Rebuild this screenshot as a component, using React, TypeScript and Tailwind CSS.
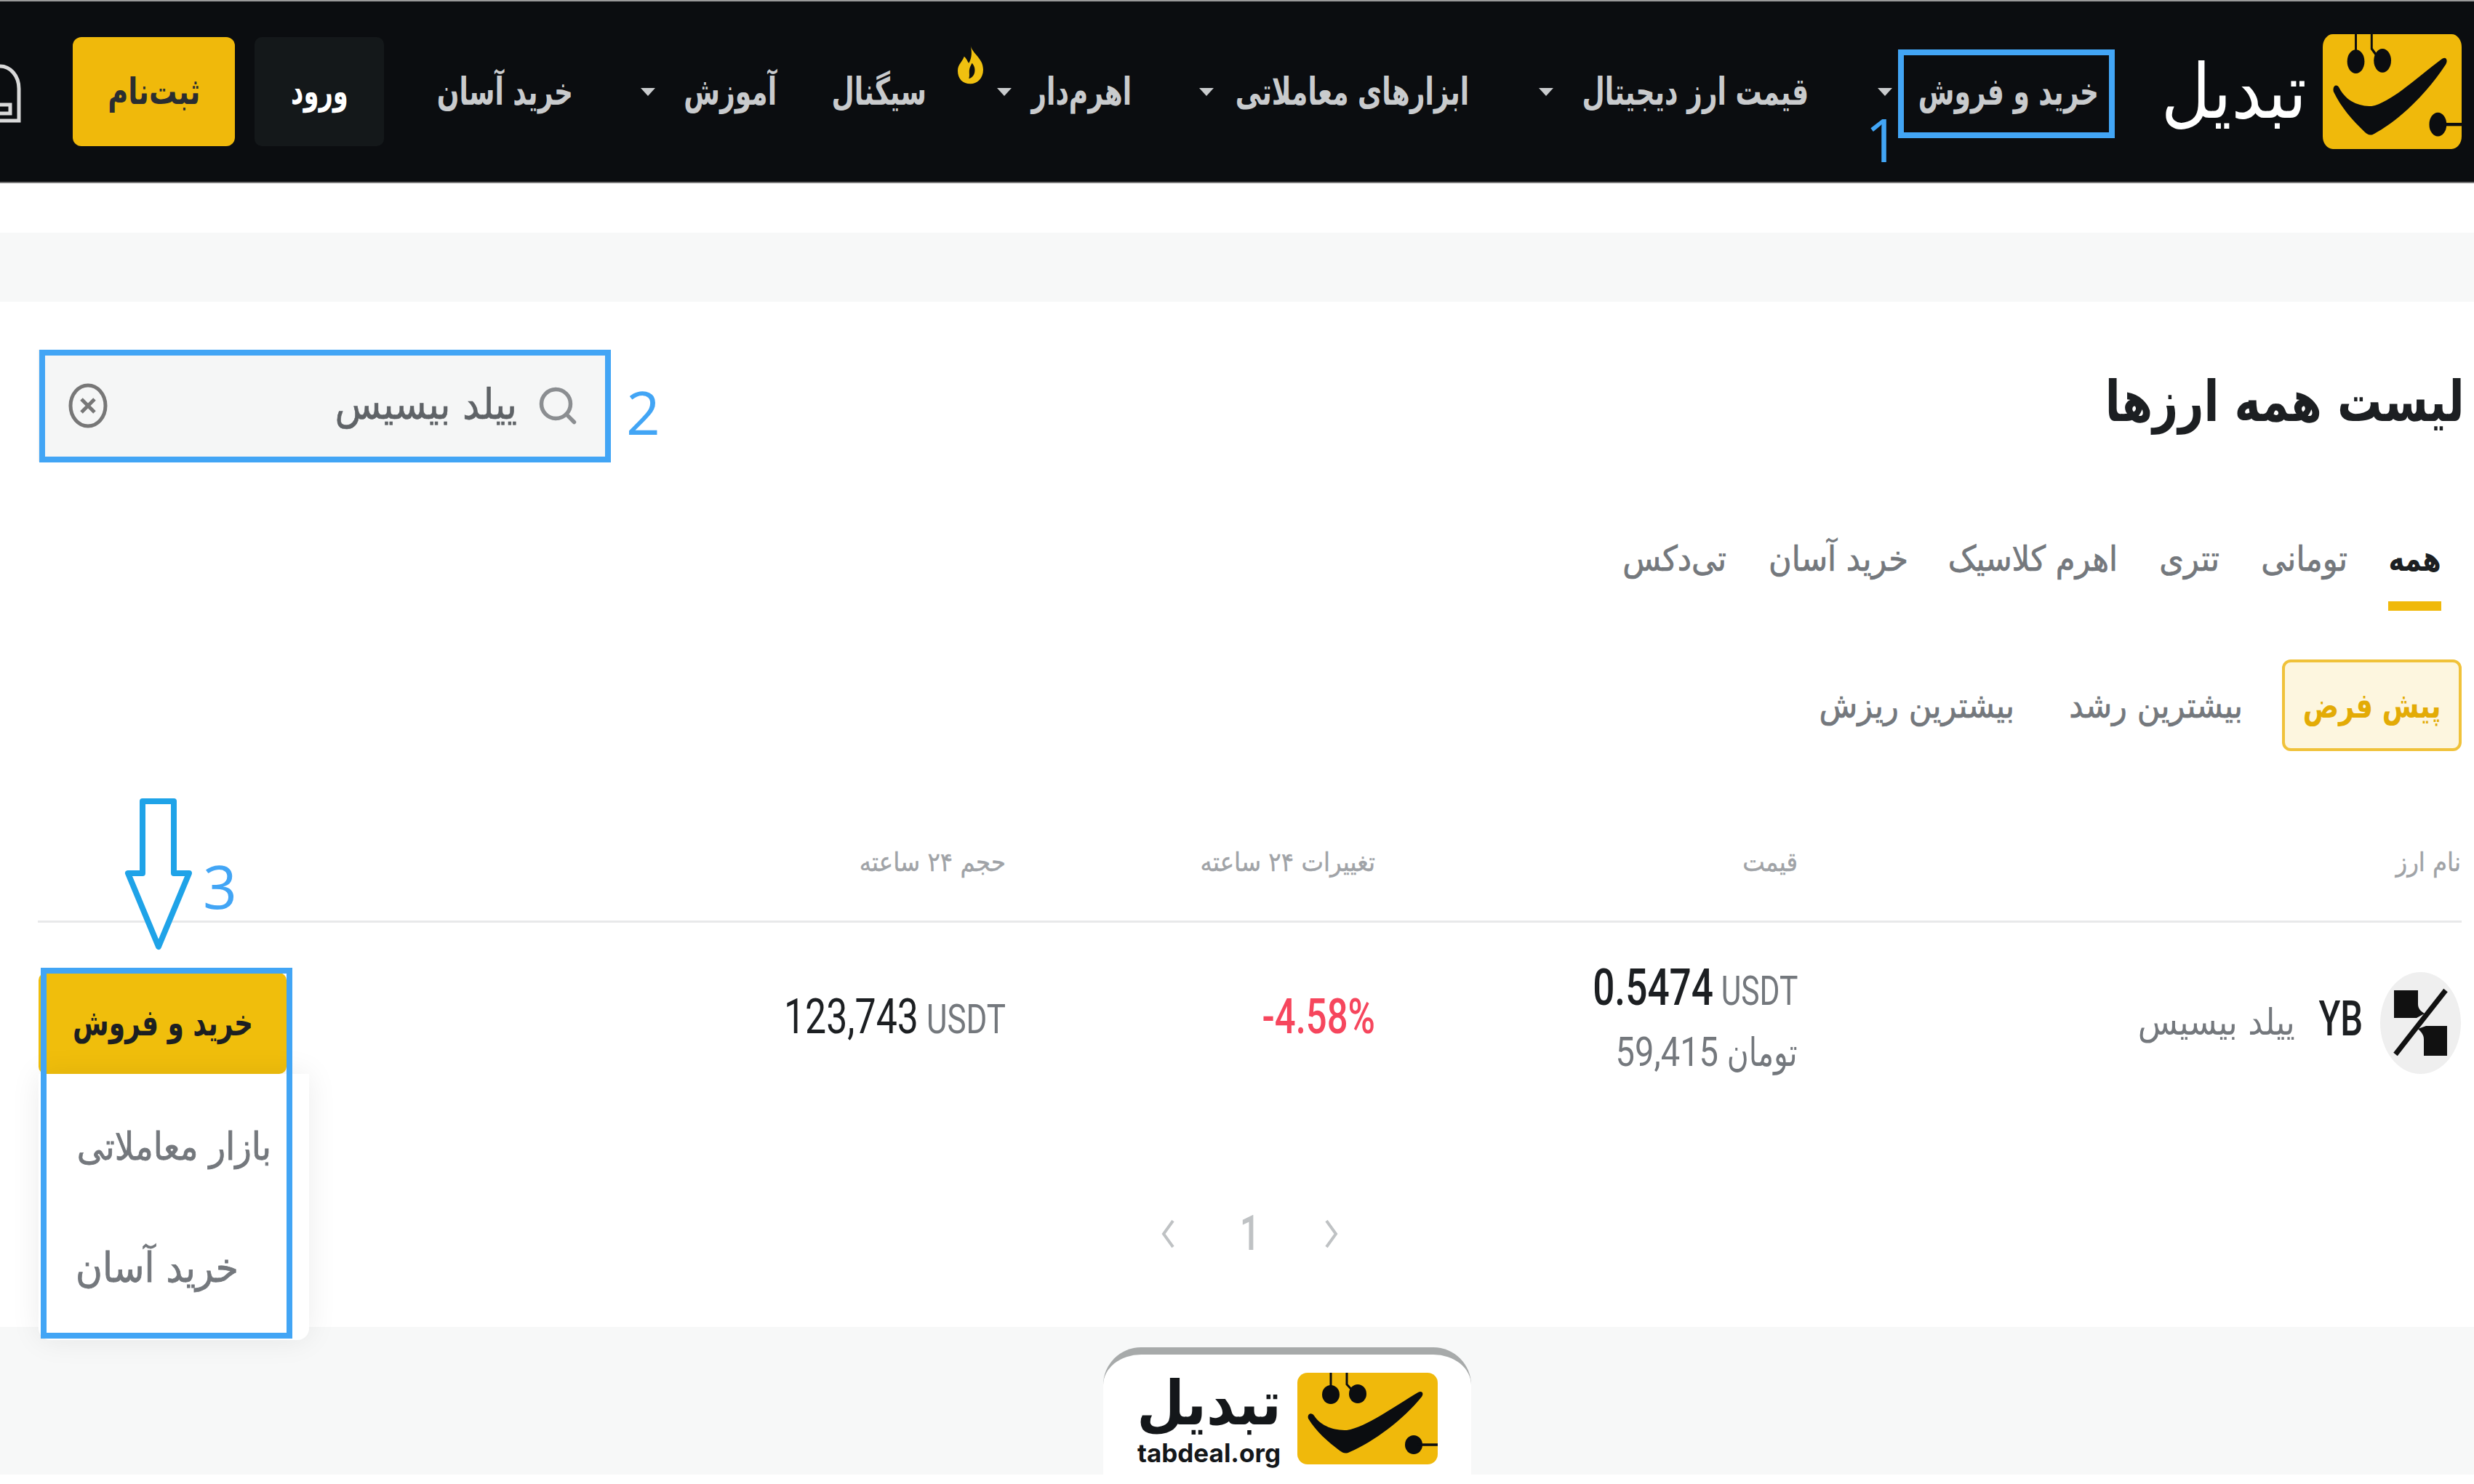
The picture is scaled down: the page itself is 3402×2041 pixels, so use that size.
import { Search } from 'lucide-react';

const BLUE = 'border-[#42a5f5]';
const NUMBER = "font-['Roboto',sans-serif]";
const NOTE = "font-['Open_Sans',sans-serif] text-[82px] leading-[112px] text-[#42a5f5]";

function Logo({ className }: { className?: string }) {
  return (
    <svg viewBox="0 0 193 126" preserveAspectRatio="none" className={className}>
      <rect width="193" height="126" rx="14" fill="#f0b90b" />
      <path d="M46 0V20M68 0V16L80 29" stroke="#0b0d10" strokeWidth="3" fill="none" />
      <ellipse cx="46" cy="30" rx="12" ry="13" fill="#0b0d10" />
      <ellipse cx="83" cy="29" rx="12" ry="13" fill="#0b0d10" />
      <path
        d="M15 63C13 56 20 54 23 59C33 74 50 79 68 79C95 75 135 45 166 27C172 24 174 29 171 33C145 65 105 95 72 109C66 112 62 110 58 107C42 95 25 80 15 63Z"
        fill="#0b0d10"
      />
      <ellipse cx="160" cy="99" rx="12" ry="13" fill="#0b0d10" />
      <path d="M165 99H193" stroke="#0b0d10" strokeWidth="3.5" />
    </svg>
  );
}

function Caret() {
  return <span className="inline-block h-0 w-0 shrink-0 border-x-[10px] border-t-[11px] border-x-transparent border-t-[#c9cbcd]" />;
}

function NavItem({ label, width, caret }: { label: string; width: string; caret?: boolean }) {
  return (
    <div className={`flex shrink-0 items-center text-[52px] font-bold text-[#c9cbcd] ${width}`}>
      <span className="min-w-0 flex-1 origin-right scale-x-[0.77] whitespace-nowrap">{label}</span>
      {caret && <Caret />}
    </div>
  );
}

function Header() {
  return (
    <header className="relative flex h-[252px] shrink-0 items-center border-t-2 border-b-2 border-t-[#9a9a9a] border-b-[#777] bg-[#0b0d10] pr-[17px]">
      <Logo className="h-[158px] w-[191px] shrink-0" />
      <span className="mr-[22px] w-[195px] shrink-0 whitespace-nowrap text-[104px] leading-none text-white">تبدیل</span>
      <div className="mr-[91px] flex items-center">
        <NavItem label="خرید و فروش" width="w-[304px]" caret />
        <NavItem label="قیمت ارز دیجیتال" width="w-[371px] mr-[95px]" caret />
        <NavItem label="ابزارهای معاملاتی" width="w-[371px] mr-[96px]" caret />
        <NavItem label="اهرم‌دار" width="w-[185px] mr-[93px]" caret />
        <div className="relative mr-[97px]">
          <NavItem label="سیگنال" width="w-[126px]" />
          <svg viewBox="4 0 16 32" preserveAspectRatio="none" className="absolute -right-[78px] top-1/2 -mt-[66px] h-[57px] w-[35px]">
            <path
              d="M12 1C13 8 20 11 20 20C20 27 16 31 12 31C7 31 4 27 4 21C4 16 7 14 8 10C10 12 10 14 11 15C13 11 13 6 12 1Z"
              fill="#f0c010"
            />
            <path d="M13 15C16 19 15 26 11 27C12 23 10 21 13 15Z" fill="#0b0d10" />
          </svg>
        </div>
        <NavItem label="آموزش" width="w-[187px] mr-[80px]" caret />
        <NavItem label="خرید آسان" width="w-[193px] mr-[93px]" />
      </div>
      <div className="mr-[67px] flex h-[150px] w-[178px] shrink-0 items-center justify-center rounded-[10px] bg-[#14181a] text-[50px] font-bold text-white">
        <span className="scale-x-[0.75]">ورود</span>
      </div>
      <div className="mr-[27px] flex h-[150px] w-[223px] shrink-0 items-center justify-center rounded-[12px] bg-[#f0b90b] text-[50px] font-bold text-[#2a2d31]">
        <span className="scale-x-[0.85]">ثبت‌نام</span>
      </div>
      <svg viewBox="0 0 30 86" className="absolute left-0 top-[84px] h-[86px] w-[30px]" fill="none" stroke="#d9d9d9" strokeWidth="5">
        <path d="M0 5C14 5 26 18 26 36V80H0" />
        <path d="M0 58H14V70H0" />
      </svg>
    </header>
  );
}

function Tabs() {
  const tabs = [
    { label: 'تومانی', width: 'w-[122px] mr-[56px]' },
    { label: 'تتری', width: 'w-[86px] mr-[54px]' },
    { label: 'اهرم کلاسیک', width: 'w-[234px] mr-[54px]' },
    { label: 'خرید آسان', width: 'w-[196px] mr-[54px]' },
    { label: 'تی‌دکس', width: 'w-[146px] mr-[54px]' },
  ];
  return (
    <div className="mt-[119px] flex h-[112px] items-start pr-[28px] text-[48px] leading-[72px] text-[#74787d] [-webkit-text-stroke:0.7px_#74787d]">
      <div className="flex w-[73px] flex-col items-center">
        <span className="origin-center scale-x-[0.85] whitespace-nowrap font-bold text-[#1c1f22] [-webkit-text-stroke:0]">همه</span>
        <span className="mt-[23px] h-[13px] w-[73px] bg-[#f0b90b]" />
      </div>
      {tabs.map((tab) => (
        <span key={tab.label} className={`whitespace-nowrap ${tab.width}`}>
          {tab.label}
        </span>
      ))}
    </div>
  );
}

function Filters() {
  return (
    <div className="mt-[63px] flex h-[126px] items-center text-[48px] text-[#74787d] [-webkit-text-stroke:0.7px_#74787d]">
      <div className="flex h-[126px] w-[247px] items-center justify-center rounded-[12px] border-[4px] border-[#f0c23a] bg-[#fdf6df] font-bold text-[#e3ab06] [-webkit-text-stroke:0]">
        <span className="scale-x-[0.85] whitespace-nowrap">پیش فرض</span>
      </div>
      <span className="mr-[54px] w-[232px] whitespace-nowrap">بیشترین رشد</span>
      <span className="mr-[82px] w-[266px] whitespace-nowrap">بیشترین ریزش</span>
    </div>
  );
}

function YbIcon() {
  return (
    <svg viewBox="0 0 111 140" className="h-[140px] w-[111px] shrink-0">
      <ellipse cx="55.5" cy="70" rx="55.5" ry="70" fill="#efefef" />
      <path d="M19 25H52V44C52 50 56 54 61 57L50 63H19ZM92 115H60V92C60 86 56 82 52 78L63 74H92Z" fill="#111" />
      <path d="M90 25L21 113" stroke="#111" strokeWidth="7" />
    </svg>
  );
}

function Table() {
  const columns = 'grid grid-cols-[912px_581px_508px_1fr] items-center pr-[1px]';
  return (
    <div className="mt-[73px]">
      <div className={`${columns} h-[160px] text-[36px] text-[#a0a3a7] [-webkit-text-stroke:0.4px_#a0a3a7]`}>
        <span>نام ارز</span>
        <span>قیمت</span>
        <span>تغییرات ۲۴ ساعته</span>
        <span>حجم ۲۴ ساعته</span>
      </div>
      <div className="h-[3px] bg-[#e8e9ea]" />
      <div className={`${columns} mt-[54px]`}>
        <div className="flex items-center">
          <YbIcon />
          <span className={`${NUMBER} mr-[24px] origin-right scale-x-[0.73] pb-[10px] text-[67px] font-medium text-[#1c1f22]`}>YB</span>
          <span className="mr-[10px] whitespace-nowrap text-[50px] text-[#74787d]">ییلد بیسیس</span>
        </div>
        <div className="flex flex-col items-start pb-[8px]">
          <div dir="ltr" className={`${NUMBER} flex h-[70px] origin-right scale-x-[0.76] items-baseline gap-[14px] leading-[70px]`}>
            <span className="text-[70px] font-medium text-[#1c1f22]">0.5474</span>
            <span className="text-[56px] text-[#74787d]">USDT</span>
          </div>
          <div className="mt-[19px] flex h-[70px] origin-right scale-x-[0.84] items-baseline gap-[14px] text-[54px] leading-[70px] text-[#74787d]">
            <span>تومان</span>
            <span className={`${NUMBER} text-[56px]`}>59,415</span>
          </div>
        </div>
        <span dir="ltr" className={`${NUMBER} origin-right scale-x-[0.77] pb-[16px] text-right text-[66px] font-medium text-[#f6465d]`}>
          -4.58%
        </span>
        <div dir="ltr" className={`${NUMBER} flex origin-right scale-x-[0.785] items-baseline justify-end gap-[14px] pb-[16px]`}>
          <span className="text-[66px] text-[#1c1f22]">123,743</span>
          <span className="text-[56px] text-[#74787d]">USDT</span>
        </div>
      </div>
      <div dir="ltr" className="mt-[174px] flex items-center justify-center gap-[84px] text-[#bfc2c4]">
        <svg viewBox="0 0 20 40" className="h-[40px] w-[20px]" fill="none" stroke="currentColor" strokeWidth="4">
          <path d="M17 2L4 20L17 38" />
        </svg>
        <span className={`${NUMBER} scale-x-[0.75] text-[66px] font-medium leading-none`}>1</span>
        <svg viewBox="0 0 20 40" className="h-[40px] w-[20px]" fill="none" stroke="currentColor" strokeWidth="4">
          <path d="M3 2L16 20L3 38" />
        </svg>
      </div>
    </div>
  );
}

function ActionMenu() {
  return (
    <div className="absolute left-[53px] top-[1338px] flex w-[372px] flex-col">
      <div className="mr-auto flex h-[139px] w-[341px] items-center justify-center rounded-[10px] bg-[#f0be0c] text-[50px] font-bold text-[#1c1f22]">
        <span className="scale-x-[0.8] whitespace-nowrap">خرید و فروش</span>
      </div>
      <div className="h-[366px] rounded-b-[16px] bg-white text-[#74787d] shadow-[0_0_40px_rgba(0,0,0,0.08)] [-webkit-text-stroke:0.8px_#74787d]">
        <div className="flex h-[200px] items-center pr-[52px] text-[52px]">بازار معاملاتی</div>
        <div className="flex h-[134px] items-center pr-[97px] text-[56px]">خرید آسان</div>
      </div>
    </div>
  );
}

function Annotations() {
  return (
    <>
      <div className={`absolute left-[2610px] top-[68px] h-[122px] w-[298px] border-[8px] ${BLUE}`} />
      <span className={`${NOTE} absolute left-[2565px] top-[135px]`}>1</span>
      <div className={`absolute left-[54px] top-[481px] h-[155px] w-[786px] border-[8px] ${BLUE}`} />
      <span className={`${NOTE} absolute left-[861px] top-[510px]`}>2</span>
      <span className={`${NOTE} absolute left-[279px] top-[1162px]`}>3</span>
      <svg viewBox="0 0 96 210" className="absolute left-[170px] top-[1098px] h-[210px] w-[96px]">
        <path d="M26 4H69V103H90L48 204L6 103H26Z" fill="#fff" stroke="#1fa3e8" strokeWidth="8" strokeLinejoin="round" />
      </svg>
      <div className={`absolute left-[56px] top-[1331px] h-[510px] w-[346px] border-[8px] ${BLUE}`} />
    </>
  );
}

export default function App() {
  return (
    <div dir="rtl" className="relative flex h-[2041px] w-[3402px] flex-col overflow-hidden bg-white font-['DejaVu_Sans_Condensed','DejaVu_Sans',sans-serif]">
      <Header />
      <div className="h-[68px] shrink-0 bg-white" />
      <div className="h-[95px] shrink-0 bg-[#f7f8f8]" />
      <main className="h-[1410px] shrink-0 rounded-t-[24px] bg-white pr-[17px] pl-[52px] pt-[88px]">
        <div className="flex h-[110px] items-center justify-between">
          <h1 className="-mr-[4px] origin-right scale-x-[0.87] whitespace-nowrap pb-[12px] text-[78px] font-bold text-[#1c1f22]">لیست همه ارزها</h1>
          <div className="flex h-[154px] w-[785px] items-center bg-[#f5f6f6] pr-[40px] pl-[42px] text-[#5f6367]">
            <Search size={60} strokeWidth={2.2} className="shrink-0 text-[#8b8e91]" />
            <span className="mr-[26px] pb-[4px] text-[58px] [-webkit-text-stroke:0.6px_#5f6367]">ییلد بیسیس</span>
            <svg viewBox="0 0 54 62" className="mr-auto h-[62px] w-[54px]" fill="none" stroke="#777" strokeWidth="5">
              <ellipse cx="27" cy="31" rx="24" ry="28" />
              <path d="M18 22L36 40M36 22L18 40" />
            </svg>
          </div>
        </div>
        <Tabs />
        <Filters />
        <Table />
      </main>
      <footer className="flex h-[203px] shrink-0 justify-center bg-[#f7f8f8] pl-[138px] pt-[28px]">
        <div className="h-[175px] w-[506px] rounded-t-[52px] border-t-[10px] border-[#a7aaaa] bg-white">
          <div className="flex items-start pr-[46px] pt-[25px]">
            <Logo className="h-[126px] w-[193px] shrink-0" />
            <div className="mr-[24px] flex w-[195px] flex-col items-center">
              <span className="text-[84px] font-bold leading-[84px] text-[#14171a]">تبدیل</span>
              <span dir="ltr" className="mt-[6px] font-['Inter',sans-serif] text-[35px] font-bold leading-[40px] text-[#14171a]">tabdeal.org</span>
            </div>
          </div>
        </div>
      </footer>
      <div className="h-[13px] shrink-0 bg-white" />
      <ActionMenu />
      <Annotations />
    </div>
  );
}
